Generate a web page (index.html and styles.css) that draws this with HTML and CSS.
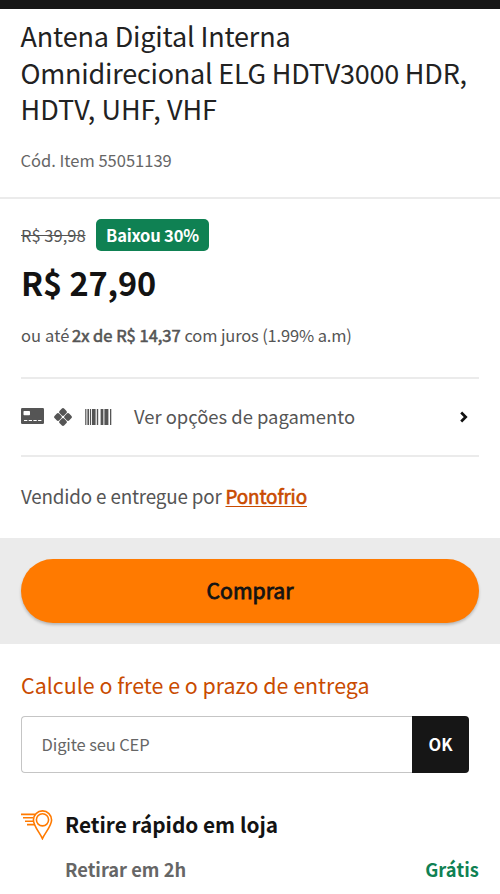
FILE: index.html
```html
<!DOCTYPE html>
<html lang="pt-BR">
<head>
<meta charset="utf-8">
<title>Antena Digital Interna</title>
<link rel="stylesheet" href="styles.css">
</head>
<body>
<div class="topbar"></div>
<main>
  <header class="product">
    <h1><span class="t1">Antena Digital Interna</span><br><span class="t2">Omnidirecional ELG HDTV3000 HDR,</span><br><span class="t3">HDTV, UHF, VHF</span></h1>
    <p class="code">Cód. Item 55051139</p>
  </header>
  <section class="pricing">
    <div class="discount"><del>R$ 39,98</del><span class="badge">Baixou 30%</span></div>
    <div class="price">R$ 27,90</div>
    <p class="installments"><span class="lead">ou até</span> <strong>2x de R$ 14,37</strong> <span class="rate">com juros (1.99% a.m)</span></p>
    <div class="payment">
      <svg class="card" width="24" height="17" viewBox="0 0 24 17"><rect x="0" y="0" width="23" height="16" rx="1.2" fill="#555"/><rect x="2.5" y="3" width="6.5" height="4.3" rx=".7" fill="#fff"/><path d="M3 12.500h3.300m1.400 0H11m1.400 0h3.300m1.400 0h3.300" stroke="#fff" stroke-width="1.200"/></svg>
      <svg class="pix" width="18" height="18" viewBox="0 0 18 18"><g fill="#555" transform="rotate(45 9 9)"><rect x="2.200" y="2.200" width="6.500" height="6.500" rx="1.900"/><rect x="9.300" y="2.200" width="6.500" height="6.500" rx="1.900"/><rect x="2.200" y="9.300" width="6.500" height="6.500" rx="1.900"/><rect x="9.300" y="9.300" width="6.500" height="6.500" rx="1.900"/></g></svg>
      <svg class="bars" width="27" height="16" viewBox="0 0 27 16"><path fill="#555" d="M.2 0h1.200v16H.2zM2.400 0h1.700v16H2.400zM5 0h1.100v16H5zM7 0h3.600v16H7zM11.800 0h1.400v16h-1.400zM15.600 0h2.800v16h-2.800zM19.400 0h4v16h-4zM25 0h1.300v16H25z"/></svg>
      <span class="label">Ver opções de pagamento</span>
      <svg class="chevron" width="9" height="12" viewBox="0 0 9 12"><path d="M2.200 1.500 6.700 6 2.200 10.500" fill="none" stroke="#111" stroke-width="2.700"/></svg>
    </div>
    <p class="seller"><span>Vendido e entregue por</span> <a>Pontofrio</a></p>
  </section>
  <div class="buy"><button>Comprar</button></div>
  <section class="shipping">
    <h2>Calcule o frete e o prazo de entrega</h2>
    <form class="zip"><div class="field">Digite seu CEP</div><div class="ok">OK</div></form>
    <div class="pickup">
      <svg width="32" height="30" viewBox="0 0 32 30" fill="none" stroke="#ff7a00" stroke-width="1.600"><path d="M21.400 28.600C19 23 12.400 16 12.400 10a9 9 0 0 1 18.200 0c0 6-6.800 13-9.200 18.600Z"/><circle cx="21.500" cy="9.800" r="6.100"/><path d="M0 4.400h14M2 7.800h10.500M4 11.300h8.500M6 14.600h7.500"/></svg>
      <h3>Retire rápido em loja</h3>
    </div>
    <div class="option"><span class="when">Retirar em 2h</span><span class="free">Grátis</span></div>
  </section>
</main>
</body>
</html>
```
FILE: styles.css
```css
* { box-sizing: border-box; }
body {
  margin: 0;
  height: 894px;
  overflow: hidden;
  background: #fff;
  color: #555;
  font-family: "Noto Sans CJK JP", "Noto Sans", sans-serif;
  white-space: nowrap;
}
h1, h2, h3, p { margin: 0; font-weight: 400; }
.topbar { height: 8.5px; background: #161616; }
.product { height: 190px; padding: 9.3px 21px 0 20.5px; border-bottom: 2px solid #ebebeb; }
h1 { font-size: 27px; line-height: 36.7px; color: #222; }
.t1 { letter-spacing: -.17px; }
.t2 { letter-spacing: -.23px; }
.t3 { letter-spacing: .02px; }
.code { margin-top: 22px; font-size: 16.5px; line-height: 20px; color: #666; }
.pricing { height: 339.5px; padding: 20.5px 21px 0; }
.discount { display: flex; gap: 10px; height: 32px; }
del { width: 65px; font-size: 16.5px; line-height: 33px; }
.badge {
  width: 113px;
  border-radius: 5px;
  background: #0f8153;
  color: #fff;
  text-align: center;
  font-size: 16.5px;
  font-weight: 700;
  line-height: 33px;
  letter-spacing: -.2px;
}
.price { margin-top: 10px; font-size: 32.5px; font-weight: 700; line-height: 41px; letter-spacing: -.1px; color: #131313; }
.installments { display: flex; gap: 4px; margin-top: 22px; height: 53px; font-size: 16.5px; line-height: 23px; }
.lead { width: 47px; letter-spacing: .1px; }
.installments strong { width: 108.5px; font-weight: 400; -webkit-text-stroke: .6px #555; }
.rate { letter-spacing: -.15px; }
.payment { display: flex; align-items: center; height: 80px; border: solid #ebebeb; border-width: 2px 0; }
.payment svg { flex: none; position: relative; top: -.5px; }
.pix { margin-left: 9px; }
.bars { margin-left: 13px; }
.label { margin-left: 22px; padding-bottom: 3px; font-size: 18.4px; line-height: 24px; }
.chevron { margin-left: auto; margin-right: 11.5px; }
.seller { margin-top: 25.5px; font-size: 18.8px; line-height: 26px; display: flex; gap: 4px; }
.seller span { width: 200.5px; letter-spacing: -.16px; }
.seller a {
  color: #c94b00;
  letter-spacing: -.1px;
  -webkit-text-stroke: .6px #c94b00;
  text-decoration: underline;
  text-decoration-thickness: 1px;
  text-underline-offset: 2px;
}
.buy { height: 106px; padding: 20.5px 21px; background: #ebebeb; }
button {
  display: block;
  width: 100%;
  height: 64.5px;
  padding: 0 0 3px;
  border: 0;
  border-radius: 33px;
  background: #ff7a00;
  box-shadow: 0 2px 3px rgba(0, 0, 0, .22);
  color: #131313;
  font: 400 21.2px "Noto Sans CJK JP", sans-serif;
  -webkit-text-stroke: .8px #131313;
}
.shipping { padding: 26px 21px 0; }
h2 { font-size: 21.4px; line-height: 30px; color: #c94b00; }
.zip { display: flex; width: 448px; height: 57px; margin: 16px 0 0; font-size: 16.5px; line-height: 55px; }
.field { flex: 1; padding-left: 19.5px; border: 1.5px solid #c5c5c5; border-right: 0; border-radius: 4px 0 0 4px; color: #666; letter-spacing: -.13px; }
.ok { width: 57px; border-radius: 0 4px 4px 0; background: #161616; color: #fff; text-align: center; font-weight: 700; line-height: 57px; }
.pickup { display: flex; gap: 12px; margin-top: 37px; height: 45px; }
h3 { font-size: 20.8px; font-weight: 700; line-height: 29px; color: #131313; }
.option { display: flex; justify-content: space-between; padding-left: 44px; font-size: 18.3px; font-weight: 700; line-height: 29px; color: #666; }
.free { color: #0f8153; letter-spacing: .1px; }
```
